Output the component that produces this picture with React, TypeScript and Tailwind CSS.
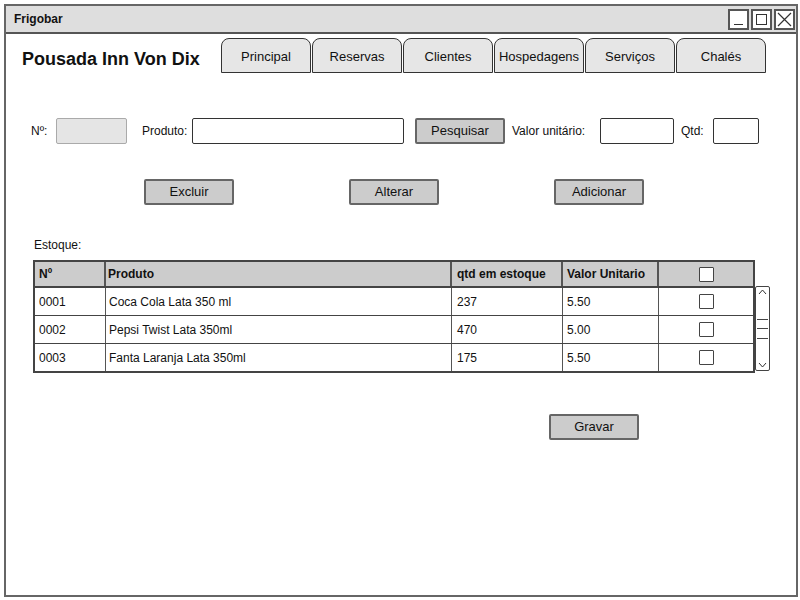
import React from 'react'

const font = { fontFamily: '"Comic Sans MS", "Liberation Sans", "DejaVu Sans", sans-serif' }

const tabs = ['Principal', 'Reservas', 'Clientes', 'Hospedagens', 'Serviços', 'Chalés']

const rows = [
  { n: '0001', p: 'Coca Cola Lata 350 ml', q: '237', v: '5.50' },
  { n: '0002', p: 'Pepsi Twist Lata 350ml', q: '470', v: '5.00' },
  { n: '0003', p: 'Fanta Laranja Lata 350ml', q: '175', v: '5.50' },
]

function Btn({ label, w = 'w-[90px]' }: { label: string; w?: string }) {
  return (
    <div className={`${w} h-[26px] flex items-center justify-center bg-[#cccccc] border-2 border-[#666] rounded-[2px] text-[13px] text-[#111]`}>
      {label}
    </div>
  )
}

function Check() {
  return <div className="w-[15px] h-[15px] border border-[#444] bg-white rounded-[1px]" />
}

export default function App() {
  return (
    <div className="w-[800px] h-[600px] bg-white pt-[4px] pl-[4px]" style={font}>
      <div className="w-[794px] h-[593px] border-2 border-[#666] flex flex-col">
        {/* title bar */}
        <div className="h-[28px] shrink-0 bg-[#dedede] border-b-2 border-[#555] flex items-center justify-between pl-[8px] pr-[1px]">
          <span className="text-[12px] font-bold text-[#111]">Frigobar</span>
          <div className="flex gap-[2px]">
            <div className="w-[21px] h-[21px] border-2 border-[#555] bg-white flex items-end justify-center pb-[3px]">
              <div className="w-[9px] h-[1px] bg-[#333]" />
            </div>
            <div className="w-[21px] h-[21px] border-2 border-[#555] bg-white flex items-center justify-center">
              <div className="w-[11px] h-[11px] border border-[#333]" />
            </div>
            <div className="w-[21px] h-[21px] border-2 border-[#555] bg-white flex items-center justify-center">
              <svg width="15" height="15" viewBox="0 0 15 15">
                <path d="M1 1 L14 14 M14 1 L1 14" stroke="#333" strokeWidth="1.2" />
              </svg>
            </div>
          </div>
        </div>

        {/* header */}
        <div className="flex items-end mt-[4px] pl-[16px]">
          <div className="w-[199px] pb-[2px] text-[18px] font-bold text-[#111] leading-none mb-[3px]">Pousada Inn Von Dix</div>
          <div className="flex gap-[1px]">
            {tabs.map((t) => (
              <div
                key={t}
                className="w-[90px] h-[35px] bg-[#e6e6e6] border border-[#333] rounded-t-[8px] flex items-center justify-center pt-[2px] text-[13px] text-[#111]"
              >
                {t}
              </div>
            ))}
          </div>
        </div>

        {/* form row */}
        <div className="flex items-center mt-[45px] pl-[25px] text-[12px] text-[#111]">
          <span className="w-[25px]">Nº:</span>
          <div className="w-[71px] h-[26px] bg-[#e5e5e5] border border-[#aaa] rounded-[2px]" />
          <span className="ml-[15px] w-[50px]">Produto:</span>
          <div className="w-[212px] h-[26px] bg-white border border-[#333] rounded-[2px]" />
          <div className="ml-[11px]">
            <Btn label="Pesquisar" w="w-[90px]" />
          </div>
          <span className="ml-[7px] w-[88px]">Valor unitário:</span>
          <div className="w-[74px] h-[26px] bg-white border border-[#333] rounded-[2px]" />
          <span className="ml-[7px] w-[32px]">Qtd:</span>
          <div className="w-[46px] h-[26px] bg-white border border-[#333] rounded-[2px]" />
        </div>

        {/* action buttons */}
        <div className="flex mt-[35px] pl-[138px] gap-[115px]">
          <Btn label="Excluir" w="w-[90px]" />
          <Btn label="Alterar" w="w-[90px]" />
          <Btn label="Adicionar" w="w-[90px]" />
        </div>

        <div className="mt-[31px] pl-[28px] text-[12px] text-[#111]">Estoque:</div>

        {/* table */}
        <div className="mt-[6px] ml-[27px] w-[738px] text-[12px] text-[#111]">
          <div className="flex w-[722px] h-[28px] bg-[#cccccc] border-2 border-[#444] font-bold">
            <div className="w-[71px] border-r-2 border-[#555] flex items-center pl-[4px]">Nº</div>
            <div className="w-[346px] border-r-2 border-[#555] flex items-center pl-[2px]">Produto</div>
            <div className="w-[111px] border-r-2 border-[#555] flex items-center pl-[5px]">qtd em estoque</div>
            <div className="w-[96px] border-r-2 border-[#555] flex items-center pl-[4px]">Valor Unitario</div>
            <div className="flex-1 flex items-center justify-center">
              <Check />
            </div>
          </div>
          <div className="flex">
            <div className="w-[722px] border-2 border-t-0 border-[#444]">
              {rows.map((r, i) => (
                <div key={r.n} className={`flex ${i < 2 ? 'h-[28px] border-b border-[#444]' : 'h-[27px]'}`}>
                  <div className="w-[71px] border-r border-[#555] flex items-center pl-[4px]">{r.n}</div>
                  <div className="w-[346px] border-r border-[#555] flex items-center pl-[3px]">{r.p}</div>
                  <div className="w-[111px] border-r border-[#555] flex items-center pl-[5px]">{r.q}</div>
                  <div className="w-[96px] border-r border-[#555] flex items-center pl-[4px]">{r.v}</div>
                  <div className="flex-1 flex items-center justify-center">
                    <Check />
                  </div>
                </div>
              ))}
            </div>
            <div className="w-[15px] h-[85px] -mt-[2px] border border-[#444] rounded-[2px] flex flex-col items-center justify-between py-[2px]">
              <svg width="9" height="6" viewBox="0 0 9 6">
                <path d="M1 5 L4.5 1 L8 5" stroke="#333" fill="none" strokeWidth="1" />
              </svg>
              <div className="w-[11px] h-[20px] border-t border-b border-[#444] flex items-center">
                <div className="w-full h-[1px] bg-[#444]" />
              </div>
              <svg width="9" height="6" viewBox="0 0 9 6">
                <path d="M1 1 L4.5 5 L8 1" stroke="#333" fill="none" strokeWidth="1" />
              </svg>
            </div>
          </div>
        </div>

        <div className="mt-[41px] pl-[543px]">
          <Btn label="Gravar" w="w-[90px]" />
        </div>
      </div>
    </div>
  )
}
